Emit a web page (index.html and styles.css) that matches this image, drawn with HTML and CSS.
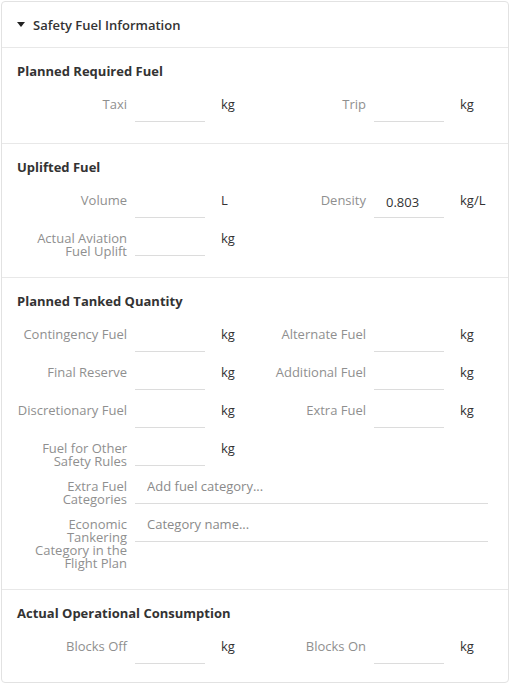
FILE: index.html
```html
<!DOCTYPE html>
<html>
<head>
<meta charset="utf-8">
<link rel="stylesheet" href="styles.css">
</head>
<body>
<div class="card">
  <div class="card-header"><span class="caret"></span>Safety Fuel Information</div>

  <section class="section">
    <h3 class="section-title">Planned Required Fuel</h3>
    <div class="grid">
      <div class="field"><label class="label">Taxi</label><input class="input" type="text"><span class="unit">kg</span></div>
      <div class="field"><label class="label">Trip</label><input class="input" type="text"><span class="unit">kg</span></div>
    </div>
  </section>

  <section class="section">
    <h3 class="section-title">Uplifted Fuel</h3>
    <div class="grid">
      <div class="field"><label class="label">Volume</label><input class="input" type="text"><span class="unit">L</span></div>
      <div class="field"><label class="label">Density</label><input class="input" type="text" value="0.803"><span class="unit">kg/L</span></div>
      <div class="field"><label class="label">Actual Aviation Fuel Uplift</label><input class="input" type="text"><span class="unit">kg</span></div>
    </div>
  </section>

  <section class="section">
    <h3 class="section-title">Planned Tanked Quantity</h3>
    <div class="grid">
      <div class="field"><label class="label">Contingency Fuel</label><input class="input" type="text"><span class="unit">kg</span></div>
      <div class="field"><label class="label">Alternate Fuel</label><input class="input" type="text"><span class="unit">kg</span></div>
      <div class="field"><label class="label">Final Reserve</label><input class="input" type="text"><span class="unit">kg</span></div>
      <div class="field"><label class="label">Additional Fuel</label><input class="input" type="text"><span class="unit">kg</span></div>
      <div class="field"><label class="label">Discretionary Fuel</label><input class="input" type="text"><span class="unit">kg</span></div>
      <div class="field"><label class="label">Extra Fuel</label><input class="input" type="text"><span class="unit">kg</span></div>
      <div class="field"><label class="label">Fuel for Other Safety Rules</label><input class="input" type="text"><span class="unit">kg</span></div>
      <div class="field wide"><label class="label">Extra Fuel Categories</label><input class="input input-wide" type="text" placeholder="Add fuel category..."></div>
      <div class="field wide"><label class="label">Economic Tankering Category in the Flight Plan</label><input class="input input-wide" type="text" placeholder="Category name..."></div>
    </div>
  </section>

  <section class="section last">
    <h3 class="section-title">Actual Operational Consumption</h3>
    <div class="grid">
      <div class="field"><label class="label">Blocks Off</label><input class="input" type="text"><span class="unit">kg</span></div>
      <div class="field"><label class="label">Blocks On</label><input class="input" type="text"><span class="unit">kg</span></div>
    </div>
  </section>
</div>
</body>
</html>
```

FILE: styles.css
```css
html, body {
  margin: 0;
  padding: 0;
  background: #ffffff;
}

body {
  font-family: "Open Sans", "Liberation Sans", sans-serif;
  color: #333333;
  padding: 1px;
}

.card {
  width: 506px;
  border: 1px solid #e2e2e2;
  border-radius: 4px;
  background: #fff;
}

.card-header {
  display: flex;
  align-items: center;
  height: 45px;
  padding-left: 15px;
  border-bottom: 1px solid #e8e8e8;
  font-size: 13px;
  font-weight: 600;
  color: #333;
}

.caret {
  width: 0;
  height: 0;
  border-left: 4px solid transparent;
  border-right: 4px solid transparent;
  border-top: 5px solid #222;
  margin-right: 8px;
}

.section {
  padding: 14px 0 21px 15px;
  border-bottom: 1px solid #e8e8e8;
}

.section.last {
  border-bottom: none;
  padding-bottom: 18px;
}

.section-title {
  margin: 0 0 12px 0;
  font-size: 13px;
  line-height: 18px;
  font-weight: 700;
  color: #333;
}

.grid {
  display: grid;
  grid-template-columns: 239px 239px;
  row-gap: 8px;
}

.field {
  display: flex;
  align-items: flex-start;
}

.wide {
  grid-column: 1 / -1;
}

.label {
  width: 110px;
  flex: none;
  text-align: right;
  font-size: 13px;
  line-height: 13px;
  padding-top: 6px;
  margin-bottom: -2px;
  color: #8f8f8f;
  margin-right: 8px;
}

.input {
  width: 70px;
  height: 30px;
  box-sizing: border-box;
  border: none;
  border-bottom: 1px solid #dcdcdc;
  padding: 0 12px 2px 12px;
  font-family: "Open Sans", "Liberation Sans", sans-serif;
  font-size: 13px;
  color: #333;
  background: transparent;
  outline: none;
  flex: none;
}

.input::placeholder {
  color: #8a8a8a;
}

.input-wide {
  width: 353px;
  padding-bottom: 5px;
}

.unit {
  margin-left: 16px;
  font-size: 13px;
  line-height: 13px;
  padding-top: 6px;
  color: #333;
}
```
